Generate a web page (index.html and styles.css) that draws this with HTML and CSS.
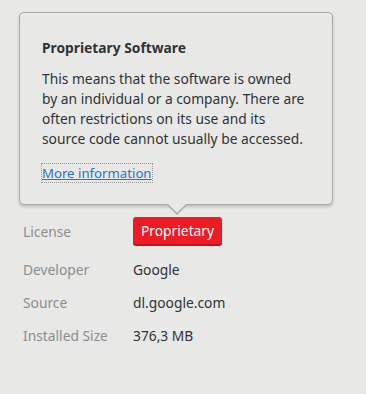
FILE: index.html
```html
<!DOCTYPE html>
<html lang="en">
<head>
  <meta charset="UTF-8">
  <meta name="viewport" content="width=device-width, initial-scale=1">
  <title>Software Details</title>
  <link rel="stylesheet" href="styles.css">
</head>
<body>
  <div class="popover">
    <h2>Proprietary Software</h2>
    <p>This means that the software is owned by an individual or a company. There are often restrictions on its use and its source code cannot usually be accessed.</p>
    <a href="#" class="more-link">More information</a>
  </div>

  <div class="details">
    <span class="label">License</span>
    <span class="value"><span class="badge">Proprietary</span></span>
    <span class="label">Developer</span>
    <span class="value">Google</span>
    <span class="label">Source</span>
    <span class="value">dl.google.com</span>
    <span class="label">Installed Size</span>
    <span class="value">376,3 MB</span>
  </div>
</body>
</html>
```

FILE: styles.css
```css
* {
  margin: 0;
  padding: 0;
  box-sizing: border-box;
  font-family: "Noto Sans", sans-serif;
}

body {
  background: #e8e8e7;
  color: #2e3436;
  width: 366px;
  height: 394px;
  overflow: hidden;
}

.popover {
  position: relative;
  width: 314px;
  height: 193px;
  margin: 12px 0 0 19px;
  padding: 26px 26px 0 22px;
  background: #e8e8e7;
  border: 1px solid #a9a9a7;
  border-radius: 5px;
  box-shadow: 0 2px 3px rgba(0, 0, 0, 0.18);
}

.popover::before,
.popover::after {
  content: '';
  position: absolute;
  left: 147px;
  width: 0;
  height: 0;
  border-left: 10px solid transparent;
  border-right: 10px solid transparent;
}

.popover::before {
  bottom: -11px;
  border-top: 10px solid #a9a9a7;
}

.popover::after {
  bottom: -9px;
  border-top: 10px solid #e8e8e7;
}

.popover h2 {
  font-size: 13.8px;
  font-weight: bold;
  line-height: 18px;
  margin-bottom: 12px;
}

.popover p {
  font-size: 13.8px;
  line-height: 20px;
  margin-bottom: 12px;
}

.more-link {
  font-size: 13.2px;
  line-height: 16px;
  color: #2a76c6;
  text-decoration: underline;
  outline: 1px dotted #9a9a9a;
}

.details {
  display: grid;
  grid-template-columns: 110px auto;
  row-gap: 14px;
  align-items: center;
  margin: 12px 0 0 23px;
  font-size: 13.8px;
}

.label {
  color: #8b8e8f;
}

.value {
  color: #2e3436;
}

.badge {
  display: inline-block;
  padding: 5px 8px 5px 8px;
  background: #ed1c24;
  color: #fff;
  border-radius: 3px;
  border-bottom: 2px solid #c4141a;
  line-height: 17px;
}
```
